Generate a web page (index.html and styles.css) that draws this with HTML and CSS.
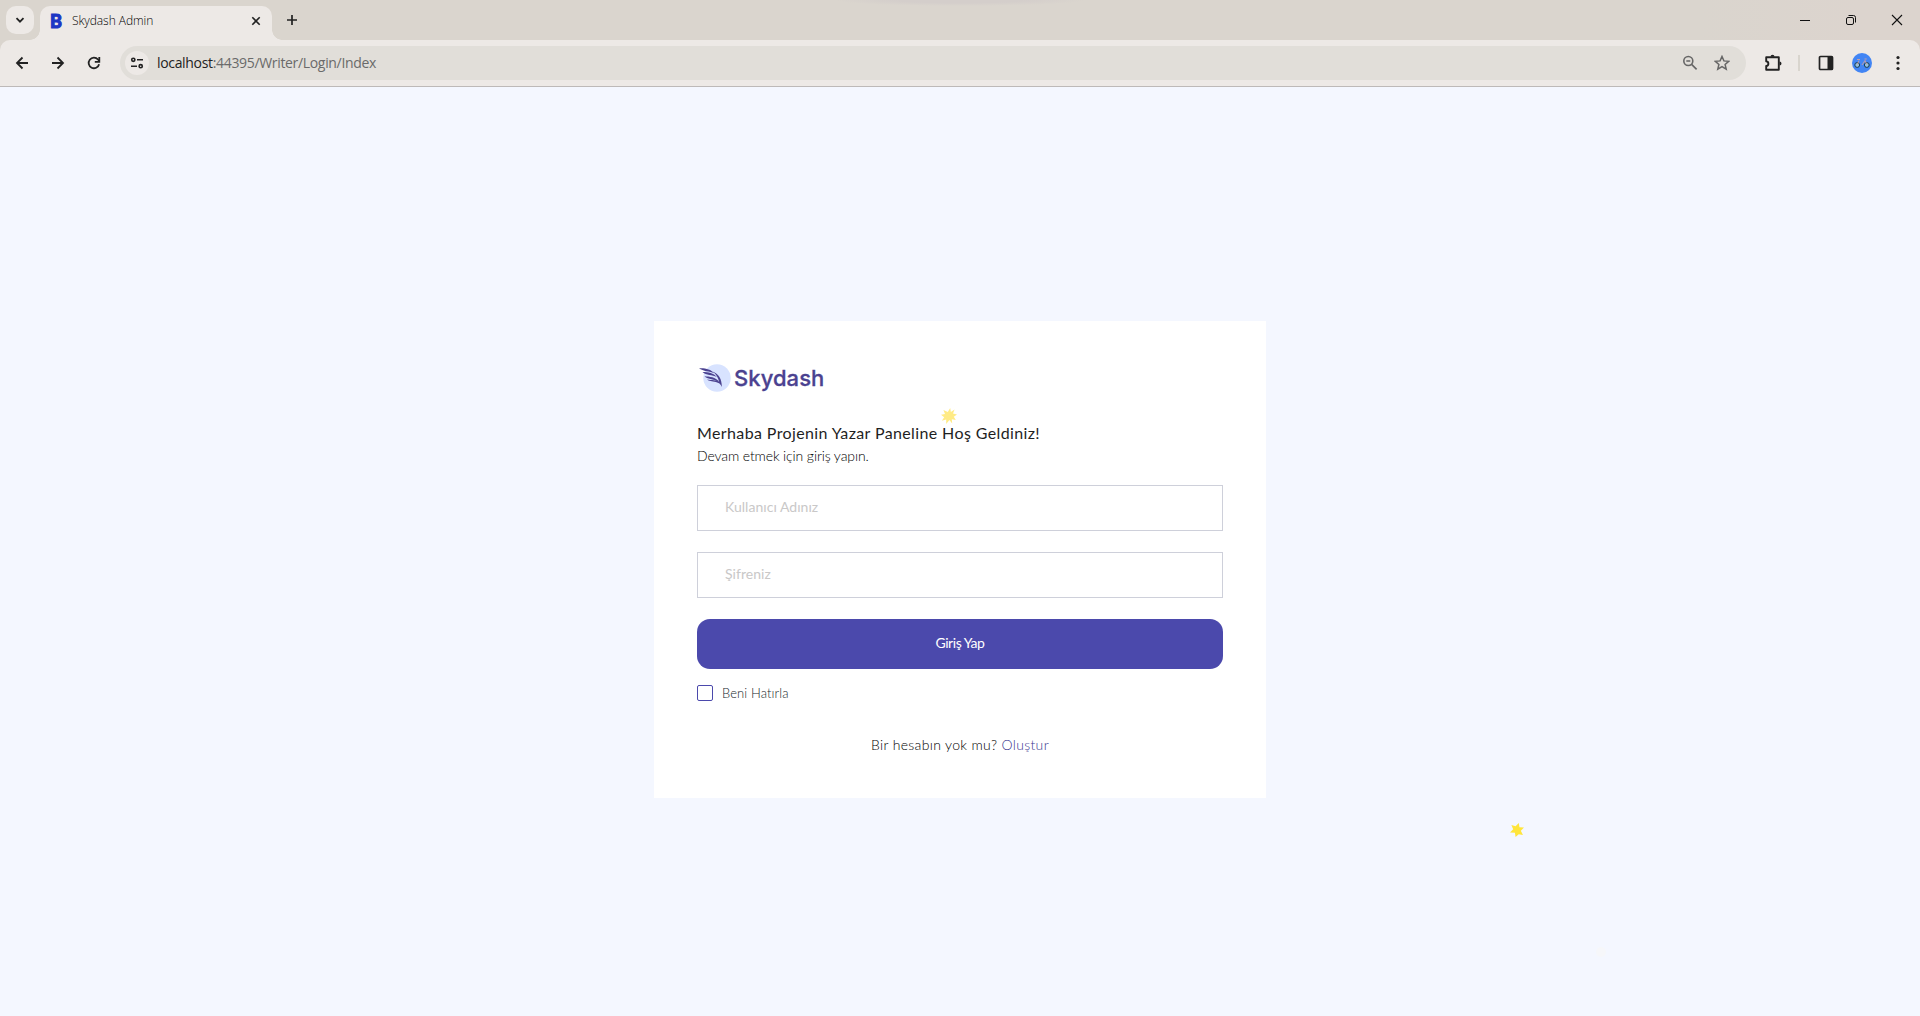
FILE: index.html
```html
<!DOCTYPE html>
<html lang="tr">
<head>
<meta charset="utf-8">
<title>Skydash Admin</title>
<link rel="stylesheet" href="styles.css">
</head>
<body>
<div class="browser">
  <header class="tabstrip">
    <button class="tab-search"><svg width="10" height="10" viewBox="0 0 10 10"><path d="M1.5 3.2 5 6.7l3.5-3.5" fill="none" stroke="#222" stroke-width="1.8"/></svg></button>
    <div class="tab">
      <span class="favicon">B</span>
      <span class="tab-title">Skydash Admin</span>
      <svg class="tab-close" width="10" height="10" viewBox="0 0 10 10"><path d="m1.3 1.3 7.4 7.4m0-7.4L1.3 8.7" stroke="#222" stroke-width="1.6"/></svg>
    </div>
    <svg class="tab-new" width="12" height="12" viewBox="0 0 12 12"><path d="M6 1v10M1 6h10" stroke="#222" stroke-width="1.7"/></svg>
    <div class="window-controls">
      <svg width="12" height="12" viewBox="0 0 12 12"><path d="M1 6.5h10" stroke="#111"/></svg>
      <svg width="12" height="12" viewBox="0 0 12 12" fill="none" stroke="#111"><rect x="1.5" y="3.5" width="7" height="7" rx="1.5"/><path d="M3.5 1.5h5a2 2 0 0 1 2 2v5"/></svg>
      <svg width="12" height="12" viewBox="0 0 12 12"><path d="m1 1 10 10m0-10L1 11" stroke="#111" stroke-width="1.1"/></svg>
    </div>
  </header>

  <nav class="toolbar">
    <div class="nav-buttons">
      <svg width="14" height="14" viewBox="0 0 14 14" fill="none" stroke="#222" stroke-width="1.8"><path d="M13 7H2m5.500-5.500L2 7l5.500 5.500"/></svg>
      <svg width="14" height="14" viewBox="0 0 14 14" fill="none" stroke="#222" stroke-width="1.8"><path d="M1 7h11M6.500 1.500 12 7l-5.500 5.500"/></svg>
      <svg width="14" height="14" viewBox="0 0 14 14" fill="none" stroke="#222" stroke-width="1.8"><path d="M12.100 8.200A5.300 5.300 0 1 1 11 3.500L12.300 5"/><path d="M12.300 1v4.800H7.800"/></svg>
    </div>
    <div class="omnibox">
      <span class="site-info"><svg width="14" height="12" viewBox="0 0 14 12" fill="none" stroke="#222" stroke-width="1.6"><circle cx="3.300" cy="2.800" r="1.600"/><path d="M7 2.800h6M1 9.200h6"/><circle cx="10.700" cy="9.200" r="1.600"/></svg></span>
      <span class="url"><b>localhost</b>:44395/Writer/Login/Index</span>
      <svg class="search-minus" width="16" height="16" viewBox="0 0 16 16" fill="none" stroke="#666" stroke-width="1.600"><circle cx="6.300" cy="6" r="4.500"/><path d="m9.600 9.400 5 5M4.300 6h4"/></svg>
      <svg width="16" height="16" viewBox="0 0 16 16"><path d="m8 1.500 1.900 4.400 4.800.4-3.600 3.200 1.100 4.700L8 11.700l-4.200 2.500 1.100-4.700-3.600-3.200 4.800-.4z" fill="none" stroke="#666" stroke-width="1.500"/></svg>
    </div>
    <div class="actions">
      <svg width="18" height="18" viewBox="0 0 18 18"><path d="M2.200 3.200h12.600v12.600H2.200V12c2.900-.5 2.900-4.200 0-4.700z" fill="none" stroke="#222" stroke-width="1.900" stroke-linejoin="round"/><path d="M6.500 2.800a2 2 0 0 1 4 0zM15.500 7.500a2 2 0 0 1 0 4z" fill="#222"/></svg>
      <span class="divider"></span>
      <svg class="panel" width="16" height="16" viewBox="0 0 16 16"><rect x="1.500" y="1.500" width="13" height="13" rx="1" fill="none" stroke="#222" stroke-width="1.700"/><path d="M9.500 1.500h5v13h-5z" fill="#222"/></svg>
      <svg class="avatar" width="20" height="20" viewBox="0 0 20 20"><circle cx="10" cy="10" r="10" fill="#4285f4"/><g fill="none"><circle cx="5.200" cy="12" r="2.400" fill="#8fc3e5" stroke="#19394d"/><circle cx="14.800" cy="12" r="2.400" fill="#8fc3e5" stroke="#19394d"/><path d="M5.200 12 7 7.500m5.500-1.500h2.200M5 6.500h3M10 12l3-4.500 1.800 4.500" stroke="#e0a596" stroke-width=".8"/></g></svg>
      <svg class="menu" width="4" height="16" viewBox="0 0 4 16" fill="#222"><circle cx="2" cy="2.500" r="1.600"/><circle cx="2" cy="8" r="1.600"/><circle cx="2" cy="13.500" r="1.600"/></svg>
    </div>
  </nav>

  <main class="page">
    <section class="card">
      <div class="logo">
        <svg width="32" height="28" viewBox="0 0 32 28"><circle cx="18" cy="14" r="13.700" fill="#d8e3ff"/><path d="M0 4.200C6 3.800 12 5 15 9.200 11 7 4 7.500 0 4.200M3.500 8c6 .1 11 1 14.500 5C13 10.800 7.500 11.500 3.500 8M5.500 12.200c5 .3 11 .8 14.800 5.600-5-3-11-2-14.800-5.600M13.500 7.500C19.500 9.500 23 15 22.800 23c-1.200-3.200-3-4.300-6-5-4-.8-7-.8-8.800-2.500 5 .8 9 .2 12.200 2.500-1-4.500-3.200-8-6.700-10.500" fill="#4b4290"/></svg>
        <span class="logo-text">Skydash</span>
      </div>
      <h1 class="heading">Merhaba Projenin Yazar Paneline Hoş Geldiniz!</h1>
      <p class="subheading">Devam etmek için giriş yapın.</p>
      <form class="form">
        <div class="field">Kullanıcı Adınız</div>
        <div class="field">Şifreniz</div>
        <button type="button" class="submit">Giriş Yap</button>
        <label class="remember"><span class="box"></span><span>Beni Hatırla</span></label>
      </form>
      <p class="signup">Bir hesabın yok mu? <a>Oluştur</a></p>
    </section>
    <svg class="star star-card" viewBox="0 0 20 20"><path d="m11.500 0 .8 5L17 2l-2 5 5 1-4 3 2.500 4-5-1L14 19.500l-3.500-4.500L6.500 20 6.500 14.500 1 16l3-4.500-4-3 5-1L3 2.500 8.500 5z"/></svg>
    <svg class="star star-page" viewBox="0 0 20 20"><path d="m12.500 0 1 6L20 6.500l-4.500 4.500 3 6-6-1L8 20l-1-6-7-.5 4.500-4.500L2 3l6 1.500z"/></svg>
    <span class="star-faint"></span>
  </main>
</div>
</body>
</html>
```
FILE: styles.css
```css
* { box-sizing: border-box; }
body { margin: 0; font-family: Lato, sans-serif; }
h1, p { margin: 0; }
button { border: 0; padding: 0; font: inherit; }
svg { display: block; flex: none; }

.browser { width: 1920px; height: 1016px; display: flex; flex-direction: column; overflow: hidden; background: linear-gradient(90deg, #dad5ce 1700px, #dcd4ce 1860px); }

.tabstrip { height: 40px; display: flex; padding-left: 6px; background: radial-gradient(ellipse 125px 6px at 960px 0, #d4cecb 50%, transparent); }
.tab-search { width: 28px; height: 28px; margin-top: 6px; border-radius: 10px; background: #ede9e6; display: grid; place-items: center; }
.tab { position: relative; width: 232px; height: 34px; margin: 6px 0 0 6px; padding: 0 11px 5px 9px; display: flex; align-items: center; border-radius: 10px 10px 0 0; background: #ede9e6; }
.tab::before, .tab::after { content: ""; position: absolute; bottom: 0; width: 10px; height: 10px; }
.tab::before { left: -10px; background: radial-gradient(circle at 0 0, transparent 9.500px, #ede9e6 10px); }
.tab::after { right: -10px; background: radial-gradient(circle at 100% 0, transparent 9.500px, #ede9e6 10px); }
.favicon { width: 14px; padding-left: 1px; font: 900 18px/18px Lato, sans-serif; color: #1d35c4; -webkit-text-stroke: 1px #1d35c4; }
.tab-title { flex: 1; padding-left: 9px; font: 300 12px/16px "Open Sans", sans-serif; letter-spacing: -.05px; color: #000; white-space: nowrap; }
.tab-new { margin: 14px 0 0 14px; }
.window-controls { margin-left: auto; padding: 14px 17px 0 0; display: flex; gap: 34px; }

.toolbar { height: 47px; display: flex; align-items: center; padding: 0 20px 1px 15px; background: #ede9e6; border-bottom: 1px solid #bdb9b8; border-radius: 10px 10px 0 0; }
.nav-buttons { display: flex; gap: 22px; width: 105px; }
.omnibox { width: 1626px; height: 34px; border-radius: 17px; background: #e1ded9; display: flex; align-items: center; gap: 16px; padding: 0 16px 0 5px; }
.site-info { width: 24px; height: 24px; border-radius: 50%; background: #ede9e6; display: grid; place-items: center; }
.url { flex: 1; margin-left: -8px; font: 400 14px/20px "Open Sans", sans-serif; letter-spacing: -.33px; color: #6a6a6a; }
.url b { font-weight: 400; color: #222; }
.actions { display: flex; align-items: center; flex: 1; padding-left: 18px; }
.divider { width: 2px; height: 16px; margin: 0 18px 0 16px; background: #d9d5ce; }
.avatar { margin-left: 18px; }
.menu { margin-left: auto; }

.page { position: relative; flex: 1; display: flex; justify-content: center; align-items: flex-start; padding-top: 234px; background: #f4f7ff; }
.card { width: 612px; height: 477px; padding: 42px 43px 0; background: #fff; display: flex; flex-direction: column; }
.logo { display: flex; align-items: center; height: 30px; padding: 0 0 1px 2px; gap: 3px; }
.logo-text { font: 500 22px/30px Inter, sans-serif; letter-spacing: .05px; color: #4b4290; -webkit-text-stroke: .3px #4b4290; }
.heading { height: 24px; margin-top: 28px; font: 400 16px/24px Lato, sans-serif; letter-spacing: .38px; color: #1f1f1f; white-space: nowrap; }
.subheading { height: 20px; margin-top: 1px; font: 300 14px/20px Lato, sans-serif; letter-spacing: -.12px; color: #000; white-space: nowrap; }
.form { margin-top: 19px; display: flex; flex-direction: column; gap: 21px; }
.field { height: 46px; padding-left: 27px; border: 1px solid #ced0da; font: 400 14px/42px Lato, sans-serif; letter-spacing: .03px; color: #c9c8c8; }
.submit { height: 50px; padding-bottom: 2px; border-radius: 13px; background: #4b49ac; color: #fff; font: 400 14px/48px Lato, sans-serif; letter-spacing: -.45px; }
.remember { display: flex; align-items: center; height: 16px; margin-top: -5px; gap: 9px; font: 300 13px/16px Lato, sans-serif; letter-spacing: .1px; color: #20282c; }
.box { width: 16px; height: 16px; border: 1px solid #4b49ac; border-radius: 2px; }
.signup { margin-top: 34px; text-align: center; font: 300 14px/20px Lato, sans-serif; letter-spacing: .33px; color: #000; }
.signup a { color: #3a3890; }

.star { position: absolute; }
.star-card { left: 941px; top: 321px; width: 16px; height: 16px; fill: #ffeb85; }
.star-page { left: 1510px; top: 736px; width: 14px; height: 14px; fill: #ffe53b; }
.star-faint { position: absolute; left: 1596px; top: 860px; width: 10px; height: 10px; border-radius: 50%; background: #f6f7fa; }
```
